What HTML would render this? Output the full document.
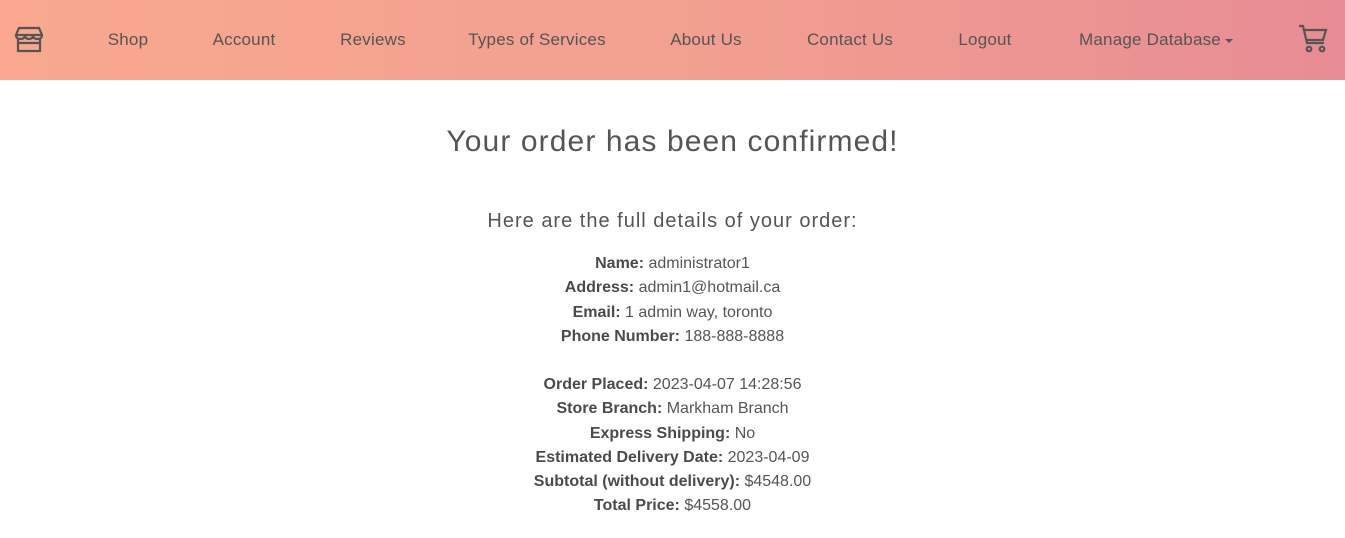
<!DOCTYPE html>
<html><head><style>
body{margin:0;width:1345px;height:538px;background:#fff;font-family:"Liberation Sans",sans-serif;color:#555;overflow:hidden}
nav{position:relative;height:80px;background:linear-gradient(90deg,#f9a88f,#f2a090 50%,#e78c94)}
nav span{position:absolute;top:30px;font-size:17px;color:#555;transform:translateX(-50%);white-space:nowrap;letter-spacing:0.2px}
h1{position:absolute;top:125px;left:0;width:1345px;text-align:center;margin:0;font-weight:normal;font-size:30px;letter-spacing:1.1px}
h2{position:absolute;top:210px;left:0;width:1345px;text-align:center;margin:0;font-weight:normal;font-size:20px;letter-spacing:1px}
.d{position:absolute;left:0;width:1345px;text-align:center;font-size:16px;line-height:24.3px}
b{color:#4a4a4a}
</style></head><body>
<nav>
<svg style="position:absolute;left:15px;top:26px" width="28" height="27" viewBox="0 0 28 27" fill="none" stroke="#555" stroke-width="2.2"><path d="M4 2h20l3 7H1z"/><path d="M1 9q0 4 4.5 4T10 9q0 4 4 4t4-4q0 4 4.5 4T27 9"/><path d="M3 13v12h22V13"/><path d="M3 17h22"/></svg>
<span style="left:128px">Shop</span>
<span style="left:244px">Account</span>
<span style="left:373px">Reviews</span>
<span style="left:537px">Types of Services</span>
<span style="left:706px">About Us</span>
<span style="left:850px">Contact Us</span>
<span style="left:985px">Logout</span>
<span style="left:1156px">Manage Database<span style="position:static;display:inline-block;transform:none;margin-left:4px;border-left:4px solid transparent;border-right:4px solid transparent;border-top:4px solid #555;vertical-align:middle"></span></span>
<svg style="position:absolute;left:1298px;top:24px" width="30" height="30" viewBox="0 0 30 30" fill="none" stroke="#555" stroke-width="2.2"><path d="M1 2h4l4 17h17"/><path d="M6 6h22l-3 10H8.5"/><circle cx="11" cy="25" r="2.3"/><circle cx="24" cy="25" r="2.3"/></svg>
</nav>
<h1>Your order has been confirmed!</h1>
<h2>Here are the full details of your order:</h2>
<div class="d" style="top:252px"><b>Name:</b> administrator1<br><b>Address:</b> admin1@hotmail.ca<br><b>Email:</b> 1 admin way, toronto<br><b>Phone Number:</b> 188-888-8888</div>
<div class="d" style="top:373px"><b>Order Placed:</b> 2023-04-07 14:28:56<br><b>Store Branch:</b> Markham Branch<br><b>Express Shipping:</b> No<br><b>Estimated Delivery Date:</b> 2023-04-09<br><b>Subtotal (without delivery):</b> $4548.00<br><b>Total Price:</b> $4558.00</div>
</body></html>
